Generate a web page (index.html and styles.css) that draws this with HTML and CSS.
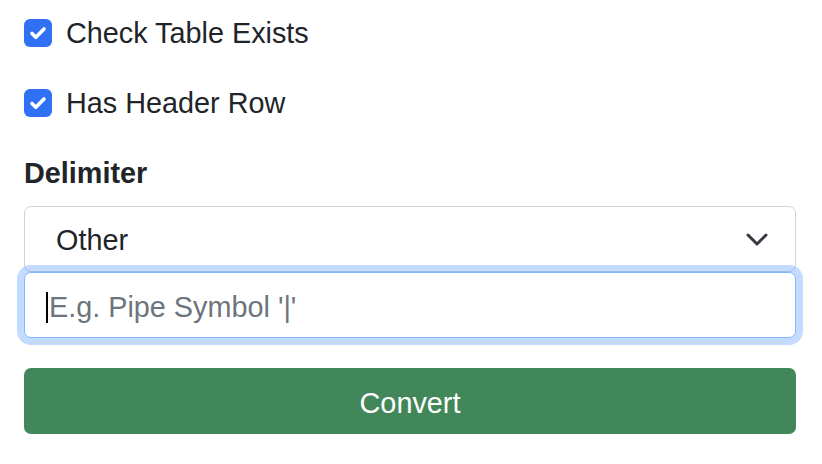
FILE: index.html
```html
<!DOCTYPE html>
<html>
<head>
<meta charset="utf-8">
<link rel="stylesheet" href="styles.css">
</head>
<body>
<form class="form">
  <label class="check">
    <span class="box"><svg viewBox="0 0 28 28" width="28" height="28"><path d="M8 14.5l3.8 3.8L20 10" fill="none" stroke="#fff" stroke-width="3.6" stroke-linecap="round" stroke-linejoin="round"/></svg></span>
    <span class="check-label">Check Table Exists</span>
  </label>
  <label class="check">
    <span class="box"><svg viewBox="0 0 28 28" width="28" height="28"><path d="M8 14.5l3.8 3.8L20 10" fill="none" stroke="#fff" stroke-width="3.6" stroke-linecap="round" stroke-linejoin="round"/></svg></span>
    <span class="check-label">Has Header Row</span>
  </label>
  <div class="field-label">Delimiter</div>
  <div class="select-wrap">
    <select class="select"><option>Other</option></select>
    <svg class="chevron" viewBox="0 0 22 13" width="22" height="13"><path d="M2 2l9 9 9-9" fill="none" stroke="#343a40" stroke-width="3" stroke-linecap="round" stroke-linejoin="round"/></svg>
  </div>
  <div class="input-wrap">
    <input class="input" type="text" placeholder="E.g. Pipe Symbol '|'">
    <span class="caret"></span>
  </div>
  <button type="button" class="btn">Convert</button>
</form>
</body>
</html>
```

FILE: styles.css
```css
* { box-sizing: border-box; }
html, body { margin: 0; padding: 0; background: #fff; }
body {
  font-family: "Liberation Sans", Arial, sans-serif;
  color: #212529;
  font-size: 28.8px;
}
.form {
  display: flex;
  flex-direction: column;
  padding: 12px 26px 0 24px;
}
.check {
  display: flex;
  align-items: center;
  height: 42px;
  gap: 14px;
  margin-bottom: 28px;
}
.box {
  width: 28px;
  height: 28px;
  border-radius: 6px;
  background: #3070f5;
  display: flex;
  align-items: center;
  justify-content: center;
}
.check-label { line-height: 42px; }
.field-label {
  font-weight: 700;
  height: 42px;
  line-height: 42px;
  margin-bottom: 12px;
}
.select-wrap { position: relative; }
.select {
  appearance: none;
  -webkit-appearance: none;
  display: block;
  width: 100%;
  height: 66px;
  border: 1px solid #ced4da;
  border-radius: 7px;
  background: #fff;
  font-family: inherit;
  font-size: 28.8px;
  color: #212529;
  padding: 2px 60px 0 31px;
  margin: 0;
}
.chevron {
  position: absolute;
  right: 28px;
  top: 27px;
}
.input-wrap { position: relative; }
.input {
  display: block;
  width: 100%;
  height: 66px;
  margin: 0;
  border: 1px solid #86b7fe;
  border-radius: 7px;
  box-shadow: 0 0 0 7px rgba(13, 110, 253, 0.25);
  font-family: inherit;
  font-size: 28.8px;
  color: #212529;
  padding: 4px 22px 0 24px;
  outline: none;
  background: #fff;
}
.input::placeholder { color: #6c757d; }
.caret {
  position: absolute;
  left: 22px;
  top: 20px;
  width: 2px;
  height: 31px;
  background: #000;
}
.btn {
  margin-top: 30px;
  height: 66px;
  width: 100%;
  border: none;
  border-radius: 7px;
  background: #41875a;
  color: #fff;
  font-family: inherit;
  font-size: 28.8px;
  padding: 5px 0 0;
}
```
